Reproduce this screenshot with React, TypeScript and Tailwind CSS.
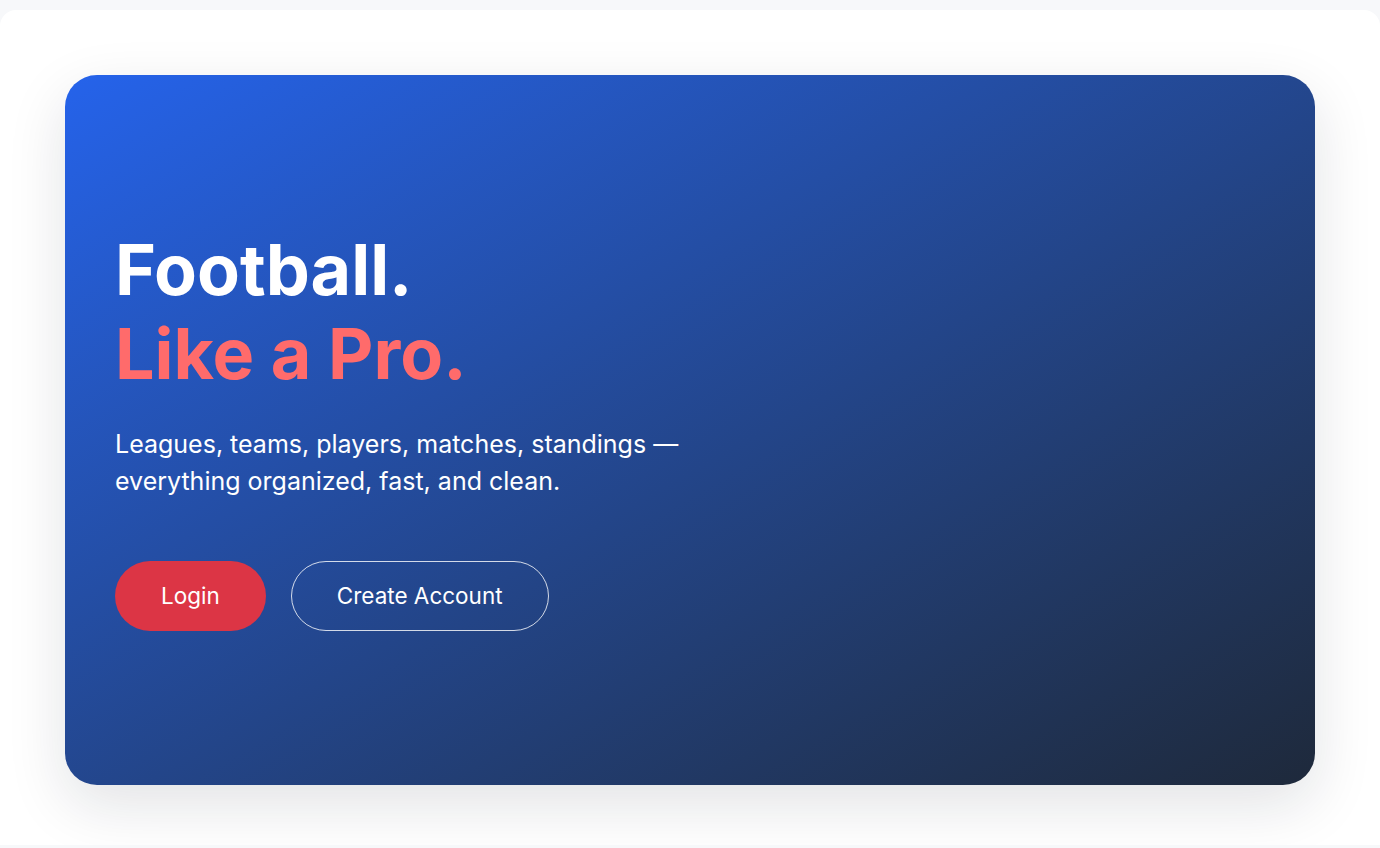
export default function App() {
  return (
    <div className="h-screen overflow-hidden bg-[#f7f8fa] pt-[10px] font-['Inter',sans-serif]">
      <section className="h-[835px] overflow-hidden rounded-t-[16px] bg-white px-[65px] pt-[65px]">
        <div className="flex h-[710px] flex-col justify-center rounded-[32px] bg-linear-to-br from-[#2563eb] to-[#1e293b] px-[50px] pb-[2px] shadow-[0_20px_60px_rgba(15,23,42,0.12)]">
          <h1 className="text-[70px] font-bold leading-[1.2] text-white">
            Football.
            <br />
            <span className="text-[#ff6b6b]">Like a Pro.</span>
          </h1>
          <p className="mt-[30px] max-w-[620px] text-[25px] leading-[1.5] text-white">
            Leagues, teams, players, matches, standings — everything organized, fast, and clean.
          </p>
          <div className="mt-[60px] flex gap-[25px]">
            <button className="h-[70px] rounded-full bg-[#dc3545] px-[46px] text-[22.5px] text-white">
              Login
            </button>
            <button className="h-[70px] rounded-full border border-white/80 px-[45px] text-[22.5px] text-white">
              Create Account
            </button>
          </div>
        </div>
      </section>
    </div>
  );
}
